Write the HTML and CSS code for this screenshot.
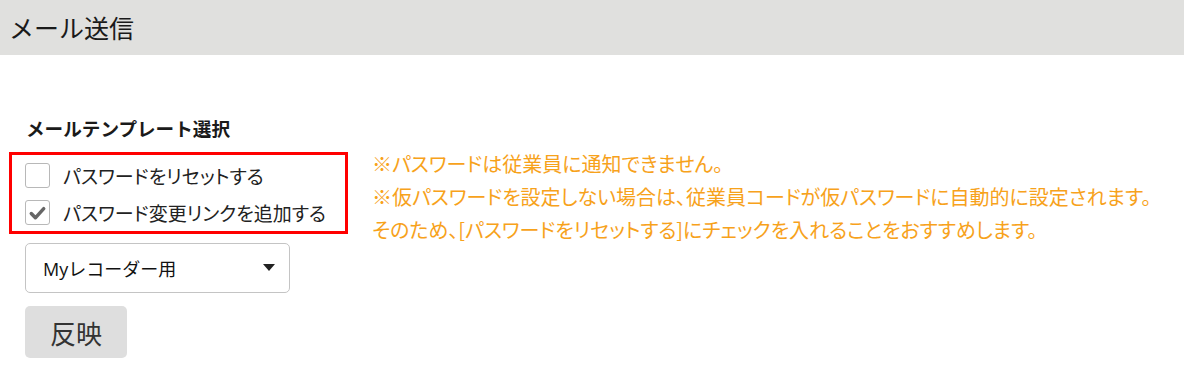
FILE: index.html
```html
<!DOCTYPE html>
<html lang="ja">
<head>
<meta charset="utf-8">
<link rel="stylesheet" href="styles.css">
</head>
<body>
<header class="page-header">
  <h1 class="page-title">メール送信</h1>
</header>
<main class="content">
  <h2 class="section-title">メールテンプレート選択</h2>
  <div class="options-row">
    <div class="check-box-group">
      <label class="check-row">
        <span class="check"></span>
        <span class="check-label">パスワードをリセットする</span>
      </label>
      <label class="check-row">
        <span class="check checked">
          <svg viewBox="0 0 24 24" width="24" height="24"><path d="M5.5 12.5 L9.8 17 L18.5 7.5" fill="none" stroke="#666" stroke-width="3.6" stroke-linecap="round" stroke-linejoin="round"/></svg>
        </span>
        <span class="check-label">パスワード変更リンクを追加する</span>
      </label>
    </div>
    <div class="notes">
      <p>※パスワードは従業員に通知できません。</p>
      <p>※仮パスワードを設定しない場合は、従業員コードが仮パスワードに自動的に設定されます。</p>
      <p>そのため、[パスワードをリセットする]にチェックを入れることをおすすめします。</p>
    </div>
  </div>
  <div class="select">
    <span class="select-text">Myレコーダー用</span>
    <svg class="select-arrow" viewBox="0 0 12 8" width="12" height="8"><path d="M0 0 H12 L6 7 Z" fill="#222"/></svg>
  </div>
  <button class="apply-btn">反映</button>
</main>
</body>
</html>
```
FILE: styles.css
```css
* { box-sizing: border-box; }
body {
  margin: 0;
  background: #fff;
  font-family: "Noto Sans CJK JP", "Noto Sans", sans-serif;
  color: #222;
}
.page-header {
  background: #e0e0de;
  height: 55px;
  display: flex;
  align-items: center;
  padding-left: 9px;
}
.page-title {
  margin: 0;
  font-size: 25px;
  font-weight: 400;
  color: #1a1a1a;
  line-height: 1;
}
.content {
  padding-left: 9px;
  display: flex;
  flex-direction: column;
  align-items: flex-start;
}
.section-title {
  margin: 61px 0 0 17px;
  font-size: 18.6px;
  font-weight: 700;
  line-height: 24px;
  color: #1a1a1a;
}
.options-row {
  display: flex;
  align-items: flex-start;
  margin-top: 12px;
}
.check-box-group {
  width: 339px;
  height: 82px;
  border: 3px solid #f00;
  padding: 8px 0 0 13px;
  display: flex;
  flex-direction: column;
  gap: 12px;
}
.check-row {
  display: flex;
  align-items: center;
  height: 25px;
}
.check {
  width: 25px;
  height: 25px;
  border: 1px solid #b8b8b8;
  border-radius: 3px;
  background: #fff;
  display: flex;
  align-items: center;
  justify-content: center;
  flex: none;
}
.check svg { display: block; }
.check-label {
  margin-left: 13px;
  font-size: 19px;
  color: #222;
  font-feature-settings: "palt";
  line-height: 25px;
}
.notes {
  margin: -5px 0 -20px 24px;
  color: #f7a21b;
  font-size: 20px;
  line-height: 33px;
  font-feature-settings: "palt";
}
.notes p { margin: 0; }
.select {
  margin: 9px 0 0 16px;
  width: 265px;
  height: 50px;
  border: 1px solid #c4c4c4;
  border-radius: 5px;
  display: flex;
  align-items: center;
  justify-content: space-between;
  padding: 0 14px 0 17px;
}
.select-text {
  font-family: "Open Sans", "Noto Sans CJK JP", sans-serif;
  font-size: 18px;
  color: #111;
}
.select-arrow { display: block; }
.apply-btn {
  margin: 13px 0 0 16px;
  width: 102px;
  height: 52px;
  border: none;
  border-radius: 5px;
  background: #dedede;
  font-family: "Noto Sans CJK JP", sans-serif;
  font-size: 26px;
  color: #333;
  padding: 0;
}
```
